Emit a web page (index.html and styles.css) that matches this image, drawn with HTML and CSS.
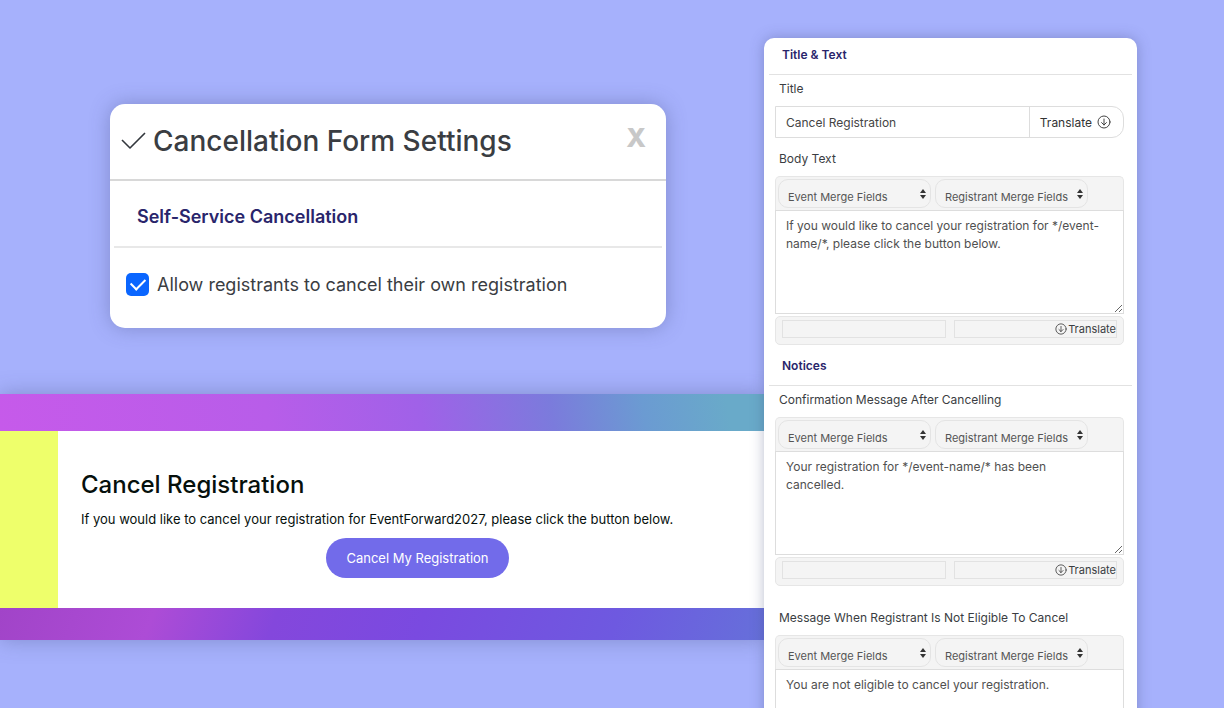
FILE: index.html
```html
<!DOCTYPE html>
<html lang="en">
<head>
    <meta charset="UTF-8">
    <meta name="viewport" content="width=device-width, initial-scale=1.0">
    <title>Cancellation Form Settings</title>
    <link rel="stylesheet" href="styles.css">
</head>
<body>
    <svg class="sprite" aria-hidden="true">
        <symbol id="arrows" viewBox="0 0 6 10">
            <path d="M3 0 L6 4 H0 Z M3 10 L0 6 H6 Z" fill="#333"/>
        </symbol>
        <symbol id="download" viewBox="0 0 14 14">
            <g fill="none" stroke="#444" stroke-linecap="round" stroke-linejoin="round">
                <circle cx="7" cy="7" r="6"/>
                <path d="M7 4 V10 M4.6 7.6 L7 10 L9.4 7.6"/>
            </g>
        </symbol>
    </svg>

    <main class="stage">
        <div class="left">
            <section class="dialog">
                <header class="dialog-header">
                    <svg class="check" viewBox="0 0 26 20" aria-hidden="true">
                        <path d="M2 9 L10 17 L25 2" fill="none" stroke="#33373d" stroke-width="1.6" stroke-linejoin="round"/>
                    </svg>
                    <h1>Cancellation Form Settings</h1>
                    <button class="close" type="button" aria-label="Close">X</button>
                </header>
                <h2>Self-Service Cancellation</h2>
                <div class="option">
                    <input type="checkbox" id="allow" checked>
                    <label for="allow">Allow registrants to cancel their own registration</label>
                </div>
            </section>

            <section class="banner">
                <div class="strip-top"></div>
                <div class="banner-body">
                    <div class="banner-content">
                        <h2>Cancel Registration</h2>
                        <p>If you would like to cancel your registration for EventForward2027, please click the button below.</p>
                        <button class="cancel-btn" type="button">Cancel My Registration</button>
                    </div>
                </div>
                <div class="strip-bottom"></div>
            </section>
        </div>

        <form class="panel">
            <h3>Title &amp; Text</h3>
            <div class="field">
                <label for="title">Title</label>
                <div class="title-row">
                    <input type="text" id="title" value="Cancel Registration">
                    <button type="button">Translate <svg aria-hidden="true"><use href="#download"/></svg></button>
                </div>
            </div>
            <div class="field">
                <label for="body">Body Text</label>
                <div class="toolbar">
                    <span class="select">
                        <select aria-label="Event Merge Fields"><option>Event Merge Fields</option></select>
                        <svg aria-hidden="true"><use href="#arrows"/></svg>
                    </span>
                    <span class="select">
                        <select aria-label="Registrant Merge Fields"><option>Registrant Merge Fields</option></select>
                        <svg aria-hidden="true"><use href="#arrows"/></svg>
                    </span>
                </div>
                <textarea id="body">If you would like to cancel your registration for */event-name/*, please click the button below.</textarea>
                <div class="status">
                    <span class="cell"></span>
                    <span class="cell"><button type="button"><svg aria-hidden="true"><use href="#download"/></svg>Translate</button></span>
                </div>
            </div>

            <h3 class="next">Notices</h3>
            <div class="field">
                <label for="confirmation">Confirmation Message After Cancelling</label>
                <div class="toolbar">
                    <span class="select">
                        <select aria-label="Event Merge Fields"><option>Event Merge Fields</option></select>
                        <svg aria-hidden="true"><use href="#arrows"/></svg>
                    </span>
                    <span class="select">
                        <select aria-label="Registrant Merge Fields"><option>Registrant Merge Fields</option></select>
                        <svg aria-hidden="true"><use href="#arrows"/></svg>
                    </span>
                </div>
                <textarea id="confirmation">Your registration for */event-name/* has been cancelled.</textarea>
                <div class="status">
                    <span class="cell"></span>
                    <span class="cell"><button type="button"><svg aria-hidden="true"><use href="#download"/></svg>Translate</button></span>
                </div>
            </div>
            <div class="field spaced">
                <label for="ineligible">Message When Registrant Is Not Eligible To Cancel</label>
                <div class="toolbar">
                    <span class="select">
                        <select aria-label="Event Merge Fields"><option>Event Merge Fields</option></select>
                        <svg aria-hidden="true"><use href="#arrows"/></svg>
                    </span>
                    <span class="select">
                        <select aria-label="Registrant Merge Fields"><option>Registrant Merge Fields</option></select>
                        <svg aria-hidden="true"><use href="#arrows"/></svg>
                    </span>
                </div>
                <textarea id="ineligible">You are not eligible to cancel your registration.</textarea>
            </div>
        </form>
    </main>
</body>
</html>
```

FILE: styles.css
```css
* {
    box-sizing: border-box;
}
body {
    margin: 0;
    font-family: Inter, "Liberation Sans", sans-serif;
    font-size: 13px;
    color: #3a3d42;
    background-color: #a6b1fc;
}
h1, h2, h3, p {
    margin: 0;
}
button, input, select, textarea {
    font: inherit;
    color: inherit;
    margin: 0;
}
button {
    cursor: pointer;
}
.sprite {
    display: none;
}
.stage {
    display: flex;
    align-items: flex-start;
    height: 100vh;
    padding-right: 87px;
    overflow: hidden;
}
.left {
    flex: 1;
    min-width: 0;
    padding-top: 104px;
}

/* Settings dialog */
.dialog {
    margin: 0 98px 66px 110px;
    padding-bottom: 31px;
    background-color: #fff;
    border-radius: 15px;
    box-shadow: 0 0 20px rgba(60, 70, 120, 0.35);
}
.dialog-header {
    display: flex;
    align-items: center;
    gap: 7px;
    height: 77px;
    padding: 0 20px 2px 10px;
    border-bottom: 2px solid #d8d8d8;
}
.check {
    width: 26px;
    height: 20px;
}
.dialog-header h1 {
    flex: 1;
    font-size: 28px;
    font-weight: 500;
}
.close {
    padding: 0 0 6px;
    border: 0;
    background: none;
    font-size: 26px;
    font-weight: 800;
    line-height: 32px;
    color: #c8c8c8;
}
.dialog h2 {
    height: 67px;
    margin: 0 4px;
    padding: 3px 23px 0;
    font-size: 18px;
    font-weight: 600;
    line-height: 65px;
    color: #29256b;
    border-bottom: 2px solid #e8e8e8;
}
.option {
    display: flex;
    align-items: center;
    gap: 8px;
    padding: 24px 16px 0;
    font-size: 18px;
    line-height: 25px;
}
.option input {
    display: grid;
    place-items: center;
    width: 23px;
    height: 23px;
    appearance: none;
    border-radius: 5px;
    background-color: #0a66ff;
}
.option input:checked::before {
    content: "";
    width: 12px;
    height: 7px;
    margin-bottom: 4px;
    border: solid #fff;
    border-width: 0 0 2px 2px;
    transform: rotate(-45deg);
}

/* Event page banner */
.banner {
    box-shadow: 0 0 20px rgba(60, 70, 120, 0.35);
}
.strip-top {
    height: 37px;
    background: linear-gradient(80deg, #c65aea 0%, #b85de9 35%, #a061e8 55%, #7b7bdc 72%, #6b9bd2 84%, #69aac9 95%);
}
.strip-bottom {
    height: 32px;
    background: linear-gradient(110deg, #a144c8 0%, #ad4cd6 20%, #8447dc 36%, #7a4ae0 55%, #6e59e0 80%, #6670da 100%);
}
.banner-body {
    border-left: 58px solid #eeff6b;
    background-color: #fff;
    color: #06100c;
}
.banner-content {
    display: flex;
    flex-direction: column;
    align-items: flex-start;
    padding: 38px 10px 30px 23px;
}
.banner h2 {
    font-size: 24px;
    font-weight: 500;
    line-height: 32px;
}
.banner p {
    margin: 8px 0;
    line-height: 21px;
}
.cancel-btn {
    align-self: center;
    height: 40px;
    padding: 0 20px;
    border: 0;
    border-radius: 20px;
    background-color: #726bea;
    color: #fff;
}

/* Form panel */
.panel {
    position: relative;
    width: 373px;
    margin-top: 38px;
    padding: 0 5px;
    font-size: 12px;
    background-color: #fff;
    border-radius: 10px;
    box-shadow: 0 0 14px rgba(60, 70, 120, 0.35);
}
.panel h3 {
    padding: 0 13px 2px;
    font-size: 12px;
    font-weight: 600;
    line-height: 34px;
    color: #29256b;
    border-bottom: 1px solid #e2e2e2;
}
.panel .next {
    margin-top: 4px;
}
.field {
    display: flex;
    flex-direction: column;
    padding: 4px 8px 7px 6px;
}
.field:has(.status) {
    padding-bottom: 0;
}
.spaced {
    margin-top: 18px;
}
.field label {
    margin: 0 0 7px 4px;
    line-height: 20px;
}
.title-row {
    display: flex;
    height: 32px;
    border: 1px solid #ddd;
    border-radius: 0 12px 12px 0;
    color: #444;
}
.title-row input {
    flex: 1;
    min-width: 0;
    padding: 0 10px;
    border: 0;
    border-right: 1px solid #ddd;
    background: none;
}
.title-row button {
    display: flex;
    align-items: center;
    gap: 5px;
    padding: 0 12px 0 10px;
    border: 0;
    background: none;
    color: #333;
}
.title-row svg {
    width: 14px;
    height: 14px;
}
.toolbar {
    display: flex;
    gap: 4px;
    height: 34px;
    padding: 2px;
    background-color: #f4f4f4;
    border: 1px solid #e6e6e6;
    border-bottom: 0;
    border-radius: 5px 5px 0 0;
}
.select {
    display: grid;
    align-items: center;
    width: 153px;
}
.select select, .select svg {
    grid-area: 1 / 1;
}
.select select {
    appearance: none;
    height: 29px;
    padding: 6px 9px 0;
    border: 1px solid #e4e4e4;
    border-radius: 10px;
    background-color: #f4f4f4;
    font-size: 11px;
    color: #555;
}
.select svg {
    justify-self: end;
    width: 6px;
    height: 10px;
    margin-right: 5px;
    pointer-events: none;
}
textarea {
    height: 104px;
    padding: 6px 18px 6px 10px;
    border: 1px solid #ddd;
    background-color: #fff;
    line-height: 18px;
    resize: vertical;
}
.panel textarea {
    color: #505050;
}
.status {
    display: flex;
    gap: 8px;
    height: 29px;
    margin-top: 2px;
    padding: 3px 6px 6px;
    background-color: #f4f4f4;
    border: 1px solid #e6e6e6;
    border-radius: 5px;
}
.cell {
    display: flex;
    justify-content: flex-end;
    flex: 1;
    border: 1px solid #e2e2e2;
}
.cell button {
    display: flex;
    align-items: center;
    gap: 1px;
    padding: 0;
    border: 0;
    background: none;
    font-size: 11px;
    line-height: 16px;
}
.cell svg {
    width: 12px;
    height: 12px;
}
```
